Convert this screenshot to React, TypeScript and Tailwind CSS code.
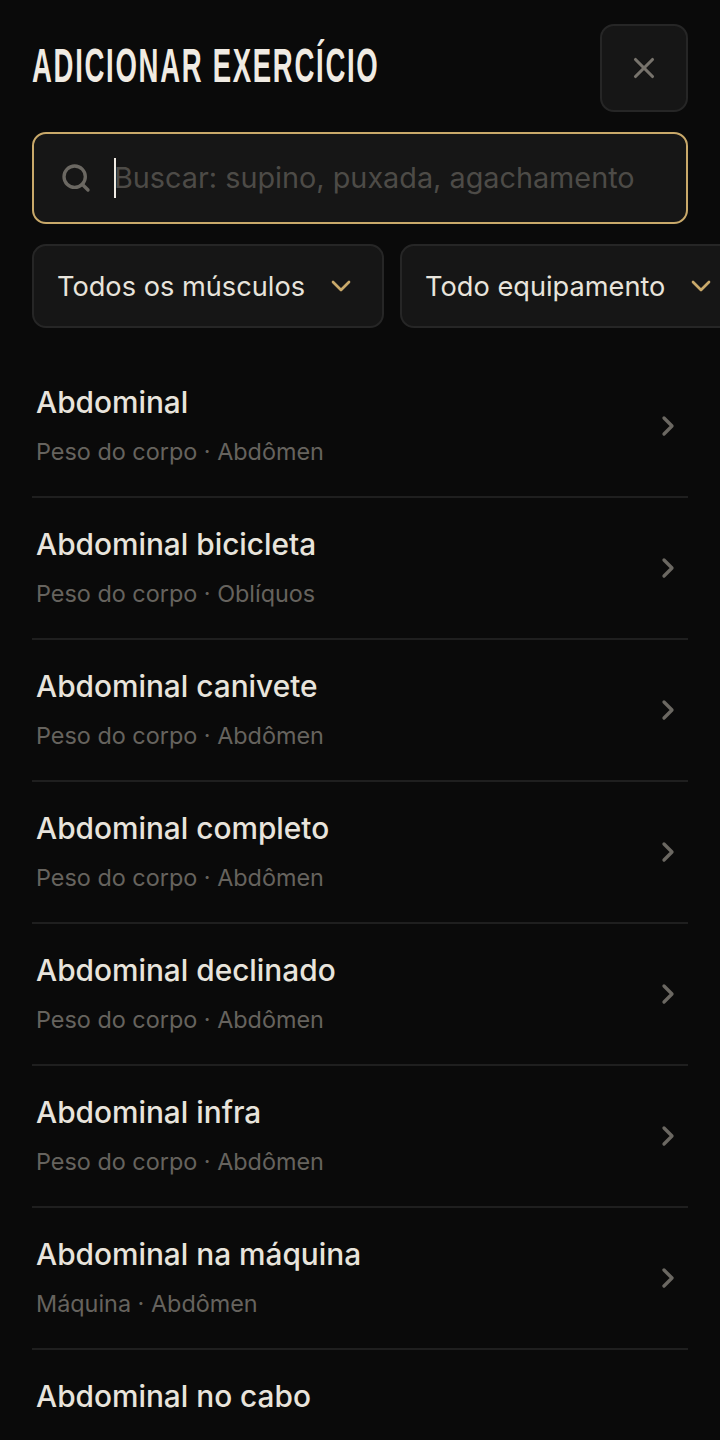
import React from 'react';
import { ChevronDown, ChevronRight, Search, X } from 'lucide-react';

const exercises = [
  { name: 'Abdominal', meta: 'Peso do corpo · Abdômen' },
  { name: 'Abdominal bicicleta', meta: 'Peso do corpo · Oblíquos' },
  { name: 'Abdominal canivete', meta: 'Peso do corpo · Abdômen' },
  { name: 'Abdominal completo', meta: 'Peso do corpo · Abdômen' },
  { name: 'Abdominal declinado', meta: 'Peso do corpo · Abdômen' },
  { name: 'Abdominal infra', meta: 'Peso do corpo · Abdômen' },
  { name: 'Abdominal na máquina', meta: 'Máquina · Abdômen' },
];

const FilterButton = ({ label }: { label: string }) => (
  <div className="flex h-[84px] shrink-0 items-center gap-[20px] rounded-[14px] border-2 border-[#262626] bg-[#161616] pl-[23px] pr-[25px]">
    <span className="pt-[2px] text-[27.2px] text-[#e8e4dc]">{label}</span>
    <ChevronDown className="text-[#c9a96a]" size={32} strokeWidth={2} />
  </div>
);

const App: React.FC = () => {
  return (
    <div className="h-[1440px] w-[720px] overflow-hidden bg-[#0a0a0a] font-['Inter',sans-serif]">
      <header className="flex items-start justify-between px-[32px] pt-[24px]">
        <h1 className="mt-[14px] w-[346px] origin-left scale-x-[0.573] whitespace-nowrap font-['Liberation_Sans',sans-serif] text-[48px] leading-[56px] font-bold tracking-[3px] text-[#f0ebe3]">
          ADICIONAR EXERCÍCIO
        </h1>
        <button className="flex h-[88px] w-[88px] shrink-0 items-center justify-center rounded-[14px] border-2 border-[#262626] bg-[#161616] text-[#77736c]">
          <X size={34} strokeWidth={2.2} />
        </button>
      </header>

      <div className="mx-[32px] mt-[20px] flex h-[92px] items-center rounded-[14px] border-2 border-[#c9a96a] bg-[#161616] pl-[26px]">
        <Search className="shrink-0 text-[#6b6862]" size={32} strokeWidth={2.5} />
        <span className="ml-[22px] h-[40px] w-[2px] shrink-0 bg-[#f0ebe3]" />
        <span className="-ml-[2px] text-[28.8px] text-[#4d4b47]">Buscar: supino, puxada, agachamento</span>
      </div>

      <div className="mt-[20px] flex gap-[16px] pl-[32px]">
        <FilterButton label="Todos os músculos" />
        <FilterButton label="Todo equipamento" />
      </div>

      <ul className="mx-[32px] mt-[28px]">
        {exercises.map((item) => (
          <li key={item.name} className="flex h-[142px] items-center border-b-2 border-[#1f1f1f] px-[4px]">
            <div className="flex-1 pt-[2px]">
              <div className="text-[29.8px] leading-[40px] font-medium text-[#e8e4dc]">{item.name}</div>
              <div className="mt-[10px] text-[23.4px] leading-[40px] text-[#66635e]">{item.meta}</div>
            </div>
            <ChevronRight className="text-[#6b6862]" size={32} strokeWidth={2.5} />
          </li>
        ))}
        <li className="pl-[4px] pt-[26px] text-[29.8px] leading-[40px] font-medium text-[#e8e4dc]">Abdominal no cabo</li>
      </ul>
    </div>
  );
};

export default App;
